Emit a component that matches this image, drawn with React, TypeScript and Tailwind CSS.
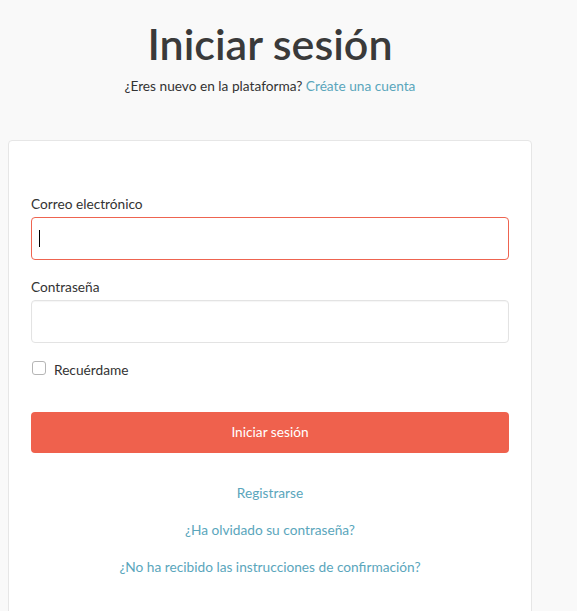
import React from "react";

export default function App() {
  return (
    <div
      className="min-h-[611px] w-full bg-[#f9f9f9] overflow-hidden"
      style={{ fontFamily: "Lato, 'Open Sans', sans-serif" }}
    >
      <div className="w-[524px] ml-[8px]">
        <div className="flex flex-col items-center pt-[16px]">
          <h1 className="text-[43px] leading-[56px] font-semibold text-[#3a3a3a]">Iniciar sesión</h1>
          <p className="mt-[4px] text-[13.7px] leading-[20px] text-[#333]">
            ¿Eres nuevo en la plataforma?{" "}
            <a className="text-[#5aa6bc]">Créate una cuenta</a>
          </p>
        </div>
        <div className="mt-[44px] bg-white border border-[#e6e6e6] rounded-[4px] px-[22px] pt-[53px] pb-[40px] min-h-[480px]">
          <label className="block text-[13.7px] leading-[20px] text-[#333]">Correo electrónico</label>
          <div className="mt-[3px] h-[43px] border border-[#ee6450] rounded-[4px] flex items-center pl-[7px]">
            <div className="w-[1px] h-[17px] bg-black" />
          </div>
          <label className="block mt-[17px] text-[13.7px] leading-[20px] text-[#333]">Contraseña</label>
          <div className="mt-[3px] h-[43px] border border-[#e3e3e3] rounded-[4px] shadow-[inset_0_1px_1px_rgba(0,0,0,0.04)]" />
          <div className="mt-[11px] flex items-start">
            <div className="w-[14px] h-[14px] border border-[#b5b5b5] rounded-[3px] bg-white ml-[1px] mt-[7px]" />
            <span className="ml-[8px] mt-[6px] text-[13.7px] leading-[20px] text-[#333]">Recuérdame</span>
          </div>
          <button className="mt-[32px] w-full h-[41px] bg-[#ef614d] rounded-[4px] text-white text-[13.7px] flex items-center justify-center">
            Iniciar sesión
          </button>
          <div className="mt-[30px] flex flex-col items-center text-[13.7px] leading-[20px] text-[#5aa6bc] gap-[17px]">
            <a>Registrarse</a>
            <a>¿Ha olvidado su contraseña?</a>
            <a>¿No ha recibido las instrucciones de confirmación?</a>
          </div>
        </div>
      </div>
    </div>
  );
}
